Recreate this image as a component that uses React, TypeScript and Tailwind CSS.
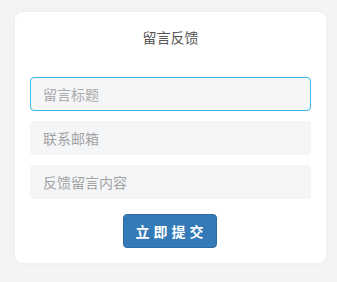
import React from 'react';

const font = { fontFamily: '"Noto Sans CJK SC", "Noto Sans", sans-serif' };

export default function App() {
  return (
    <div className="min-h-[282px] w-full bg-[#f3f4f6] pt-[12px]" style={font}>
      <div className="ml-[15px] w-[311px] rounded-[8px] bg-white px-[15px] pb-[15px] shadow-[0_0_6px_rgba(0,0,0,0.04)]">
        {/* Title */}
        <div className="flex h-[50px] items-center justify-center text-[14px] text-[#555]">
          留言反馈
        </div>

        {/* Form */}
        <div className="mt-[15px] flex flex-col gap-[10px]">
          <input
            type="text"
            placeholder="留言标题"
            className="h-[34px] w-full rounded-[4px] border border-[#3bbbe8] bg-[#f5f6f8] px-[12px] text-[14px] text-[#333] outline-none placeholder:text-[#ababab]"
          />
          <input
            type="text"
            placeholder="联系邮箱"
            className="h-[34px] w-full rounded-[4px] border border-transparent bg-[#f4f5f7] px-[12px] text-[14px] text-[#333] outline-none placeholder:text-[#a3a3a3]"
          />
          <input
            type="text"
            placeholder="反馈留言内容"
            className="h-[34px] w-full rounded-[4px] border border-transparent bg-[#f4f5f7] px-[12px] text-[14px] text-[#333] outline-none placeholder:text-[#a3a3a3]"
          />
        </div>

        <div className="mt-[15px] flex justify-center">
          <button className="-ml-[2px] h-[34px] w-[94px] rounded-[4px] border border-[#2e6da4] bg-[#337ab7] pl-[4px] text-[14px] font-semibold tracking-[4px] text-white">
            立即提交
          </button>
        </div>
      </div>
    </div>
  );
}
